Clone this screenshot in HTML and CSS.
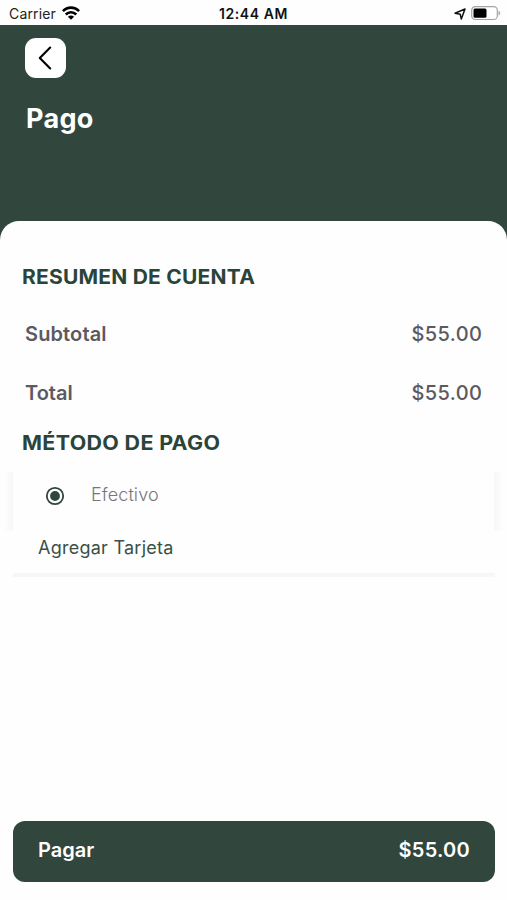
FILE: index.html
```html
<!DOCTYPE html>
<html lang="es">
<head>
<meta charset="utf-8">
<title>Pago</title>
<link rel="stylesheet" href="styles.css">
</head>
<body>
<div class="screen">
  <div class="status">
    <div class="carrier"><span>Carrier</span>
      <svg width="18" height="14" viewBox="0 0 18 14"><g fill="none" stroke="#000" stroke-width="2.7"><path d="M.9 5.200C5.400.4 12.600.4 17.100 5.200"/><path d="M3.800 8.500c2.900-3 7.500-3 10.400 0"/></g><path d="M9 13.800 5.900 10.700c1.700-1.500 4.500-1.500 6.200 0z"/></svg>
    </div>
    <div class="time">12:44 AM</div>
    <div class="indicators">
      <svg width="12" height="12" viewBox="0 0 12 12"><path d="M1 5.200 11 1 7.300 11 6.200 6.200z" fill="none" stroke="#111" stroke-width="1.500" stroke-linejoin="round"/></svg>
      <svg width="30" height="15" viewBox="0 0 30 15"><rect x=".7" y=".7" width="25.600" height="12.800" rx="3.600" fill="#fff" stroke="#a5a5a5" stroke-width="1.200"/><rect x="2.500" y="2.500" width="13" height="9.200" rx="1.500"/><path d="M27.500 4.800c2.300.7 2.300 4 0 4.700z" fill="#aaa"/></svg>
    </div>
  </div>
  <header class="header">
    <div class="back"><svg width="14" height="24" viewBox="0 0 14 24"><path d="M12.200 1.500 1.800 12l10.400 10.500" fill="none" stroke="#000" stroke-width="2.100" stroke-linecap="round" stroke-linejoin="round"/></svg></div>
    <h1 class="title">Pago</h1>
  </header>
  <main class="sheet">
    <h2 class="heading summary-heading">RESUMEN DE CUENTA</h2>
    <div class="row"><span class="label subtotal">Subtotal</span><span class="amount">$55.00</span></div>
    <div class="row"><span class="label total">Total</span><span class="amount">$55.00</span></div>
    <h2 class="heading method-heading">MÉTODO DE PAGO</h2>
    <div class="option">
      <i class="edge"></i>
      <div class="choice">
        <svg width="20" height="20" viewBox="0 0 20 20"><circle cx="10" cy="10" r="8.200" fill="none" stroke="#2f463c" stroke-width="1.800"/><circle cx="10" cy="10" r="4.900" fill="#2f463c"/></svg>
        <span class="cash">Efectivo</span>
      </div>
      <i class="edge edge-right"></i>
    </div>
    <div class="add">Agregar Tarjeta</div>
    <div class="pay"><span>Pagar</span><span class="pay-amount">$55.00</span></div>
  </main>
</div>
</body>
</html>
```
FILE: styles.css
```css
* { box-sizing: border-box; }
body { margin: 0; font-family: Inter, "Liberation Sans", sans-serif; background: #fefefe; }
svg { display: block; }
.screen { width: 507px; height: 900px; display: flex; flex-direction: column; background: #31473d; overflow: hidden; }
.status { height: 25px; flex: none; display: grid; grid-template-columns: 1fr auto 1fr; align-items: center; background: #fefefe; padding: 2px 6px 0 9px; }
.carrier { display: flex; align-items: center; gap: 6px; font-size: 14px; line-height: 20px; color: #222; letter-spacing: .15px; }
.carrier svg { margin-top: -1px; }
.time { font-size: 14px; line-height: 20px; font-weight: 600; color: #111; letter-spacing: .55px; margin-left: -3px; }
.indicators { display: flex; justify-content: flex-end; align-items: center; gap: 5px; }
.header { height: 196px; flex: none; padding: 13px 25px; }
.back { width: 41px; height: 40px; border-radius: 11px; background: #fff; display: flex; align-items: center; justify-content: center; }
.back svg { margin-right: 1px; }
.title { margin: 23px 0 0 1px; font-size: 27px; line-height: 36px; font-weight: 700; color: #fff; letter-spacing: .3px; }
.sheet { flex: 1; background: #fefefe; border-radius: 19px 19px 0 0; display: flex; flex-direction: column; padding-top: 41px; }
.heading { align-self: flex-start; margin: 0 0 0 22px; font-size: 19.5px; line-height: 30px; font-weight: 700; color: #2b4439; transform-origin: left center; }
.row { display: flex; justify-content: space-between; align-items: center; height: 58.5px; padding: 0 25px; font-size: 20px; color: #5c5960; }
.summary-heading { margin-bottom: 13px; letter-spacing: .2px; transform: scaleX(1.077); }
.label { font-weight: 600; }
.subtotal { letter-spacing: .12px; }
.amount { font-weight: 500; letter-spacing: .4px; margin-right: -.4px; }
.method-heading { margin-top: 6px; letter-spacing: .3px; transform: scaleX(1.1); }
.option { display: flex; height: 59px; margin: 14px 0 0; }
.edge { width: 13px; background: linear-gradient(to right, #fefefe 30%, #f7f7f7); }
.edge-right { transform: scaleX(-1); }
.choice { flex: 1; display: flex; align-items: center; padding: 0 32px; gap: 26px; }
.choice svg { position: relative; top: -6px; }
.cash { font-size: 18px; line-height: 24px; margin-top: -13px; font-weight: 300; color: #77777a; letter-spacing: .1px; }
.add { height: 46px; flex: none; margin: 0 12px 0 13px; padding: 5px 25px; border-bottom: 4px solid #f7f7f7; font-size: 18px; line-height: 24px; color: #3b5047; letter-spacing: .25px; }
.pay { height: 61px; margin: auto 12px 18px 13px; padding: 0 25px 4px; background: #31473d; color: #fff; border-radius: 12px; display: flex; align-items: center; justify-content: space-between; font-size: 20px; font-weight: 600; }
.pay-amount { letter-spacing: .25px; }
```
